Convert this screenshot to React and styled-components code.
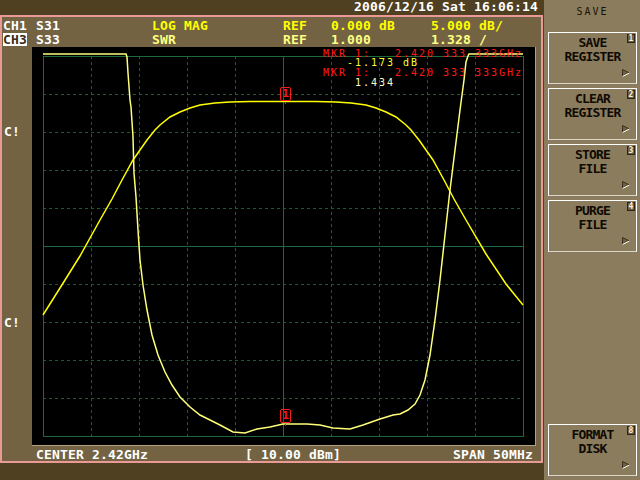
import React from 'react';
import styled, { createGlobalStyle } from 'styled-components';

const MONO = `"DejaVu Sans Mono", "Liberation Mono", monospace`;

const Global = createGlobalStyle`
  html, body { margin: 0; padding: 0; background: #504022; }
  body { width: 640px; height: 480px; overflow: hidden; }
`;

const Screen = styled.div`
  display: flex;
  width: 640px;
  height: 480px;
  background: #504022;
  font-family: ${MONO};
`;

const LeftColumn = styled.div`
  width: 543px;
  flex-shrink: 0;
  display: flex;
  flex-direction: column;
`;

const TopBar = styled.div`
  height: 15px;
  box-sizing: border-box;
  padding-right: 5px;
  text-align: right;
  color: #ffffff;
  font-weight: bold;
  font-size: 13px;
  letter-spacing: 0.17px;
  line-height: 14px;
  white-space: pre;
`;

const MainPanel = styled.div`
  height: 448px;
  box-sizing: border-box;
  border: 2px solid #e99a96;
  background: #746342;
  display: flex;
  flex-direction: column;
  padding-top: 2px;
  font-weight: bold;
  font-size: 13px;
  letter-spacing: 0.17px;
`;

const HeaderRow = styled.div`
  display: grid;
  grid-template-columns: 33px 116px 131px 48px 100px 1fr;
  height: 14px;
  line-height: 14px;
  padding-left: 1px;
  white-space: pre;
`;

const Cell = styled.span`
  color: ${p => p.$c || '#ffffff'};
`;

const InverseCell = styled.span`
  display: block;
  width: 24px;
  height: 13px;
  overflow: hidden;
  background: #ffffff;
  color: #3a2c16;
`;

const Middle = styled.div`
  display: flex;
  height: 399px;
`;

const Gutter = styled.div`
  width: 30px;
  box-sizing: border-box;
  padding: 78px 0 0 2px;
  display: flex;
  flex-direction: column;
  color: #ffffff;
  line-height: 14px;
`;

const GutterLabel = styled.span`
  height: 14px;
  margin-top: ${p => p.$gap || 0}px;
`;

const ChartBox = styled.div`
  position: relative;
  width: 504px;
  height: 399px;
  box-sizing: border-box;
  background: #000000;
  border-right: 1px solid #b4a27e;
  border-bottom: 1px solid #b4a27e;
  overflow: hidden;
`;

const ChartSvg = styled.svg`
  display: block;
`;

const MarkerText = styled.div`
  position: absolute;
  left: 291px;
  top: 1.5px;
  white-space: pre;
  font-weight: normal;
  font-size: 10px;
  letter-spacing: 1.98px;
  line-height: 9.7px;
`;

const MarkerLine = styled.div`
  color: ${p => p.$c};
  height: 9.7px;
`;

const MarkerBox = styled.div`
  position: absolute;
  left: ${p => p.$x}px;
  top: ${p => p.$y}px;
  width: 11px;
  height: 14px;
  box-sizing: border-box;
  border: 1.5px solid #ff1a1a;
  border-radius: 2px;
  color: #ff1a1a;
  font-size: 11px;
  font-weight: bold;
  letter-spacing: 0;
  line-height: 11px;
  text-align: center;
  &::after {
    content: '';
    position: absolute;
    left: 4px;
    bottom: -3.5px;
    width: 1px;
    height: 2px;
    background: #ff1a1a;
  }
`;

const Footer = styled.div`
  height: 15px;
  box-sizing: border-box;
  padding: 2px 8px 0 34px;
  display: flex;
  line-height: 14px;
  color: #ffffff;
  white-space: pre;
`;

const FooterCenter = styled.span`
  margin-left: 97px;
`;

const FooterRight = styled.span`
  margin-left: auto;
`;

const RightPanel = styled.div`
  margin-left: 1px;
  flex: 1;
  background: #8b7c5d;
  box-sizing: border-box;
  padding: 6px 0 0 4px;
  display: flex;
  flex-direction: column;
`;

const PanelTitle = styled.div`
  width: 89px;
  height: 12px;
  line-height: 12px;
  text-align: center;
  font-size: 10px;
  letter-spacing: 2px;
  color: #1a1408;
`;

const KeyList = styled.div`
  margin-top: 14px;
  display: grid;
  grid-template-rows: repeat(8, 52px);
  row-gap: 4px;
  width: 89px;
`;

const SoftKey = styled.div`
  position: relative;
  box-sizing: border-box;
  height: 52px;
  border: 1px solid #ffffff;
  border-bottom-color: #dcd6c8;
  padding-top: 3px;
  text-align: center;
  font-weight: bold;
  font-size: 13px;
  letter-spacing: -0.8px;
  line-height: 14px;
  color: #0e0a04;
`;

const EmptySlot = styled.div``;

const KeyBadge = styled.span`
  position: absolute;
  left: 78px;
  top: 1px;
  width: 8px;
  height: 9px;
  box-sizing: border-box;
  border: 1px solid #2c2416;
  background: #6e5f42;
  color: #f4f0e4;
  font-size: 8px;
  line-height: 7px;
  letter-spacing: 0;
  text-align: center;
`;

const KeyArrow = styled.svg`
  position: absolute;
  left: 73px;
  top: 36px;
`;

const trace1 = [
  [43, 315], [60, 288], [80, 256], [100, 220], [112, 199], [122, 180], [133, 160], [140, 150],
  [147, 140], [155, 130], [160, 125], [170, 117], [180, 112], [190, 108], [200, 105], [215, 103],
  [230, 102], [250, 101.5], [283, 101.5], [316, 101.5], [336, 102], [351, 103], [366, 105],
  [376, 108], [386, 112], [396, 117], [406, 125], [411, 130], [419, 140], [426, 150], [433, 160],
  [444, 180], [454, 199], [466, 220], [486, 254], [506, 284], [523, 305],
];

const trace2 = [
  [43, 54], [126, 54], [127, 57], [128, 73], [130, 100], [131, 107], [133, 137], [134, 173],
  [136, 197], [138, 230], [140, 260], [143, 285], [147, 310], [152, 335], [158, 355], [165, 372],
  [172, 385], [180, 397], [190, 407], [200, 415], [210, 420], [220, 425], [233, 432], [245, 433],
  [257, 429], [270, 427], [283, 424], [307, 424], [320, 425], [333, 428], [350, 429], [363, 425],
  [380, 419], [393, 415], [400, 414], [408, 410], [415, 404], [420, 395], [425, 380], [430, 355],
  [435, 320], [440, 280], [445, 235], [450, 190], [455, 150], [460, 110], [464, 80], [466, 62],
  [468, 56], [469, 54], [523, 54],
];

const pts = arr => arr.map(([x, y]) => `${x},${y}`).join(' ');

function Grid() {
  const lines = [];
  const x0 = 11, y0 = 9, w = 480, h = 380;
  for (let i = 1; i < 10; i++) {
    const x = x0 + i * 48 + 0.5;
    const solid = i === 5;
    lines.push(
      <line key={`v${i}`} x1={x} y1={y0} x2={x} y2={y0 + h}
        stroke={solid ? '#1b6a3c' : '#1f5a35'} strokeWidth="1"
        strokeDasharray={solid ? undefined : '3 3'} />
    );
  }
  for (let j = 1; j < 10; j++) {
    const y = y0 + j * 38 + 0.5;
    const solid = j === 5;
    lines.push(
      <line key={`h${j}`} x1={x0} y1={y} x2={x0 + w} y2={y}
        stroke={solid ? '#1b6a3c' : '#1f5a35'} strokeWidth="1"
        strokeDasharray={solid ? undefined : '3 3'} />
    );
  }
  return (
    <g>
      {lines}
      <rect x={x0 + 0.5} y={y0 + 0.5} width={w} height={h} fill="none" stroke="#1b6a3c" strokeWidth="1" />
    </g>
  );
}

function Key({ line1, line2, num }) {
  return (
    <SoftKey>
      <div>{line1}</div>
      <div>{line2}</div>
      <KeyBadge>{num}</KeyBadge>
      <KeyArrow width="8" height="8" viewBox="0 0 8 8">
        <polygon points="0.5,0.5 7.5,4 0.5,7.5" fill="#6e5f42" />
        <polyline points="0.5,7.5 0.5,0.5 7.5,4" fill="none" stroke="#3a3020" strokeWidth="1" />
        <line x1="7.5" y1="4" x2="0.5" y2="7.5" stroke="#ffffff" strokeWidth="1" />
      </KeyArrow>
    </SoftKey>
  );
}

export default function App() {
  return (
    <>
      <Global />
      <Screen>
        <LeftColumn>
          <TopBar>2006/12/16 Sat 16:06:14</TopBar>
          <MainPanel>
            <HeaderRow>
              <Cell>CH1</Cell>
              <Cell>S31</Cell>
              <Cell $c="#ffff00">LOG MAG</Cell>
              <Cell $c="#ffff00">REF</Cell>
              <Cell $c="#ffff00">0.000 dB</Cell>
              <Cell $c="#ffff00">5.000 dB/</Cell>
            </HeaderRow>
            <HeaderRow>
              <InverseCell>CH3</InverseCell>
              <Cell>S33</Cell>
              <Cell $c="#ffff80">SWR</Cell>
              <Cell $c="#ffff80">REF</Cell>
              <Cell $c="#ffff80">1.000</Cell>
              <Cell $c="#ffff80">1.328 /</Cell>
            </HeaderRow>
            <Middle>
              <Gutter>
                <GutterLabel>C!</GutterLabel>
                <GutterLabel $gap={177}>C!</GutterLabel>
              </Gutter>
              <ChartBox>
                <ChartSvg width="503" height="398" viewBox="0 0 503 398">
                  <Grid />
                  <g transform="translate(-32 -47)">
                    <polyline points={pts(trace1)} fill="none" stroke="#ffff00" strokeWidth="1.5" />
                    <polyline points={pts(trace2)} fill="none" stroke="#ffff78" strokeWidth="1.5" />
                  </g>
                </ChartSvg>
                <MarkerText>
                  <MarkerLine $c="#ff1a1a">MKR 1:   2.420 333 333GHz</MarkerLine>
                  <MarkerLine $c="#ffff30">   -1.173 dB</MarkerLine>
                  <MarkerLine $c="#ff1a1a">MKR 1:   2.420 333 333GHz</MarkerLine>
                  <MarkerLine $c="#ffffc8">    1.434</MarkerLine>
                </MarkerText>
                <MarkerBox $x={248} $y={40}>1</MarkerBox>
                <MarkerBox $x={248} $y={362}>1</MarkerBox>
              </ChartBox>
            </Middle>
            <Footer>
              <span>CENTER 2.42GHz</span>
              <FooterCenter>[ 10.00 dBm]</FooterCenter>
              <FooterRight>SPAN 50MHz</FooterRight>
            </Footer>
          </MainPanel>
        </LeftColumn>
        <RightPanel>
          <PanelTitle>SAVE</PanelTitle>
          <KeyList>
            <Key line1="SAVE" line2="REGISTER" num="1" />
            <Key line1="CLEAR" line2="REGISTER" num="2" />
            <Key line1="STORE" line2="FILE" num="3" />
            <Key line1="PURGE" line2="FILE" num="4" />
            <EmptySlot />
            <EmptySlot />
            <EmptySlot />
            <Key line1="FORMAT" line2="DISK" num="8" />
          </KeyList>
        </RightPanel>
      </Screen>
    </>
  );
}
